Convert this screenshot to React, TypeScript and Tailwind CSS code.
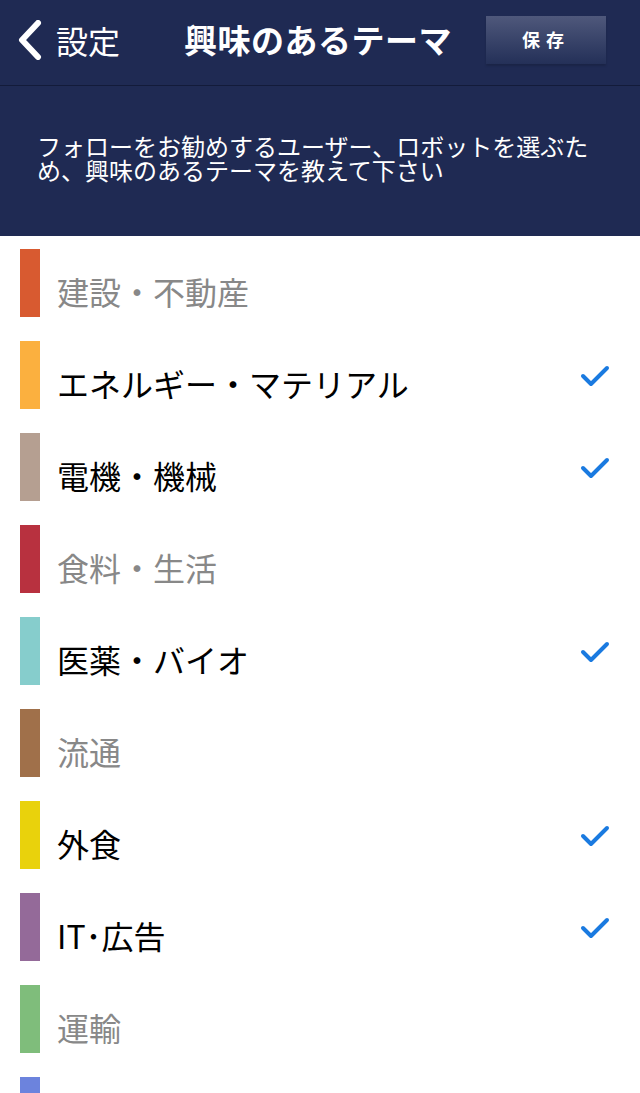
const font = "font-['Noto_Sans_CJK_JP','Noto_Sans',sans-serif]";

type Theme = { name: string; color: string; selected: boolean };

const themes: Theme[] = [
  { name: "建設・不動産", color: "bg-[#d85a30]", selected: false },
  { name: "エネルギー・マテリアル", color: "bg-[#fbb03f]", selected: true },
  { name: "電機・機械", color: "bg-[#b59f91]", selected: true },
  { name: "食料・生活", color: "bg-[#b8313f]", selected: false },
  { name: "医薬・バイオ", color: "bg-[#86cdcc]", selected: true },
  { name: "流通", color: "bg-[#a0704a]", selected: false },
  { name: "外食", color: "bg-[#e9d20c]", selected: true },
  { name: "IT･広告", color: "bg-[#946a99]", selected: true },
  { name: "運輸", color: "bg-[#7fbd7b]", selected: false },
  { name: "", color: "bg-[#6c83dd]", selected: false },
];

function Check() {
  return (
    <svg width="30" height="24" viewBox="0 0 30 24" className="shrink-0">
      <polyline points="3,12 11,20 27,4" fill="none" stroke="#1a7ae0" strokeWidth="4" strokeLinecap="round" strokeLinejoin="round" />
    </svg>
  );
}

export default function App() {
  return (
    <div className={`w-[640px] h-[1093px] overflow-hidden bg-white ${font}`}>
      <header className="flex h-[86px] items-center border-b border-[#131b3a] bg-[#1f2a53] pb-[6px] text-white">
        <div className="flex w-[150px] items-center pl-[17px]">
          <svg width="26" height="40" viewBox="0 0 26 40">
            <polyline points="21,3 5,20 21,37" fill="none" stroke="white" strokeWidth="6" strokeLinecap="round" strokeLinejoin="round" />
          </svg>
          <span className="ml-[13px] text-[32px] leading-none">設定</span>
        </div>
        <h1 className="ml-[34px] text-[33px] font-bold leading-none tracking-[0.5px]">興味のあるテーマ</h1>
        <button className="ml-auto mr-[34px] h-[48px] w-[120px] bg-gradient-to-b from-[#4f587b] to-[#243058] text-[18px] font-bold tracking-[6px] text-white shadow-[0_2px_2px_rgba(0,0,0,0.15)]">
          保存
        </button>
      </header>
      <section className="flex h-[150px] items-center bg-[#1f2a53] px-[37px] pb-[6px]">
        <p className="text-[24px] leading-[24px] text-white">
          フォローをお勧めするユーザー、ロボットを選ぶため、興味のあるテーマを教えて下さい
        </p>
      </section>
      <ul className="pt-[13px]">
        {themes.map((t, i) => (
          <li key={i} className="flex h-[92px] items-start">
            <div className={`ml-[20px] h-[68px] w-[20px] shrink-0 ${t.color}`} />
            {t.name && (
              <span
                className={`ml-[17px] mt-[22px] text-[32px] leading-[40px] ${t.selected ? "text-black" : "text-[#888888]"}`}
              >
                {t.name}
              </span>
            )}
            {t.selected && (
              <div className="ml-auto mr-[30px] mt-[23px]">
                <Check />
              </div>
            )}
          </li>
        ))}
      </ul>
    </div>
  );
}
